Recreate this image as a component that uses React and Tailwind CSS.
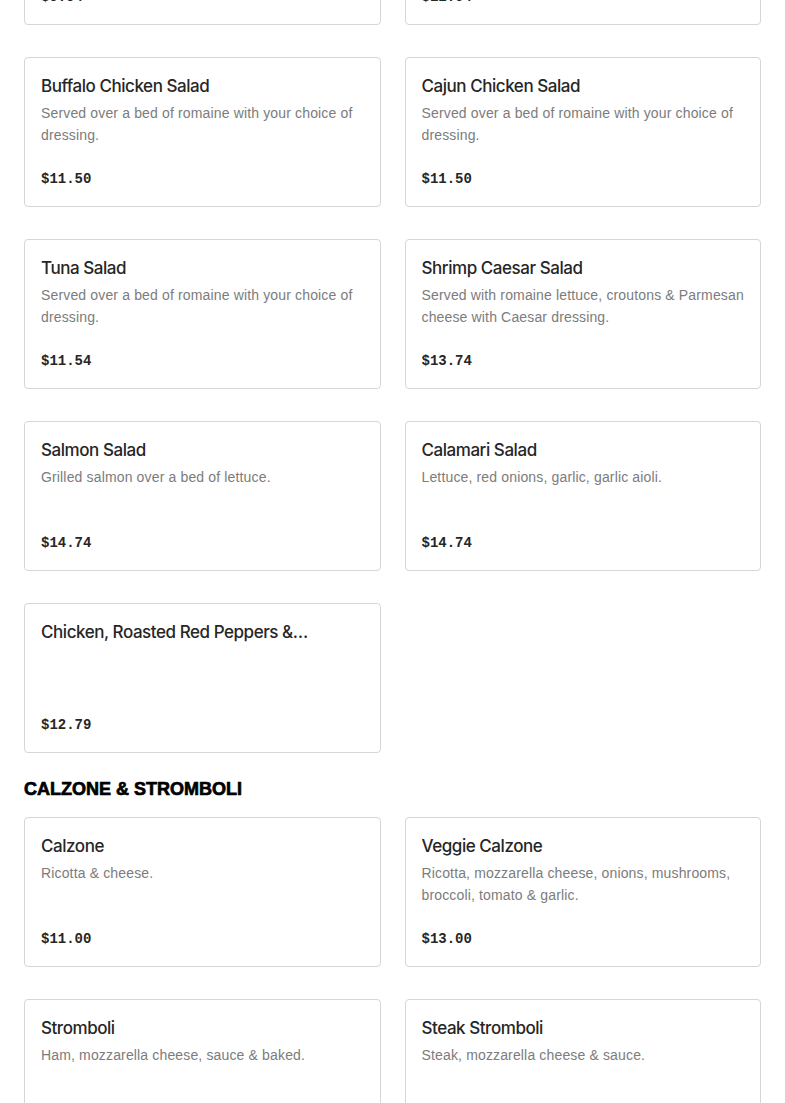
import React from "react";

const salads = [
  { t: "Buffalo Chicken Salad", d: "Served over a bed of romaine with your choice of dressing.", p: "$11.50" },
  { t: "Cajun Chicken Salad", d: "Served over a bed of romaine with your choice of dressing.", p: "$11.50" },
  { t: "Tuna Salad", d: "Served over a bed of romaine with your choice of dressing.", p: "$11.54" },
  { t: "Shrimp Caesar Salad", d: "Served with romaine lettuce, croutons & Parmesan cheese with Caesar dressing.", p: "$13.74" },
  { t: "Salmon Salad", d: "Grilled salmon over a bed of lettuce.", p: "$14.74" },
  { t: "Calamari Salad", d: "Lettuce, red onions, garlic, garlic aioli.", p: "$14.74" },
  { t: "Chicken, Roasted Red Peppers & Mozzarella Salad", d: "", p: "$12.79" },
];

const calzones = [
  { t: "Calzone", d: "Ricotta & cheese.", p: "$11.00" },
  { t: "Veggie Calzone", d: "Ricotta, mozzarella cheese, onions, mushrooms, broccoli, tomato & garlic.", p: "$13.00" },
  { t: "Stromboli", d: "Ham, mozzarella cheese, sauce & baked.", p: "$11.00" },
  { t: "Steak Stromboli", d: "Steak, mozzarella cheese & sauce.", p: "$13.00" },
];

function Card({ t, d, p }) {
  return (
    <div className="flex h-[150px] flex-col justify-between rounded-[4px] border border-[#d6d6d6] bg-white px-4 pt-4 pb-4">
      <div className="min-w-0">
        <div className="line-clamp-1 text-[17px] leading-6 font-medium text-[#262626] [font-family:Inter,'Liberation_Sans',sans-serif] tracking-[-0.45px]">
          {t}
        </div>
        {d && (
          <div className="mt-1 text-[14px] leading-[22px] tracking-[0.15px] text-[#7c7c7c] [font-family:'Liberation_Sans',Arial,sans-serif]">
            {d}
          </div>
        )}
      </div>
      <div className="text-[14px] leading-[22px] font-bold text-[#262626] [font-family:'Liberation_Mono',monospace]">
        {p}
      </div>
    </div>
  );
}

export default function App() {
  return (
    <div className="min-h-screen overflow-hidden bg-white px-6">
      <div className="-mt-[125px] grid grid-cols-2 gap-x-6 gap-y-8">
        <Card t="Chef Salad" d="Served over a bed of romaine with your choice of dressing." p="$9.94" />
        <Card t="Grilled Chicken Salad" d="Served over a bed of romaine with your choice of dressing." p="$11.04" />
        {salads.map((s) => (
          <Card key={s.t} {...s} />
        ))}
      </div>
      <h2 className="mt-6 mb-4 text-[18px] leading-6 font-black text-black [font-family:'Liberation_Sans',Arial,sans-serif] [-webkit-text-stroke:0.7px_black]">
        CALZONE &amp; STROMBOLI
      </h2>
      <div className="grid grid-cols-2 gap-x-6 gap-y-8 pb-8">
        {calzones.map((s) => (
          <Card key={s.t} {...s} />
        ))}
      </div>
    </div>
  );
}
